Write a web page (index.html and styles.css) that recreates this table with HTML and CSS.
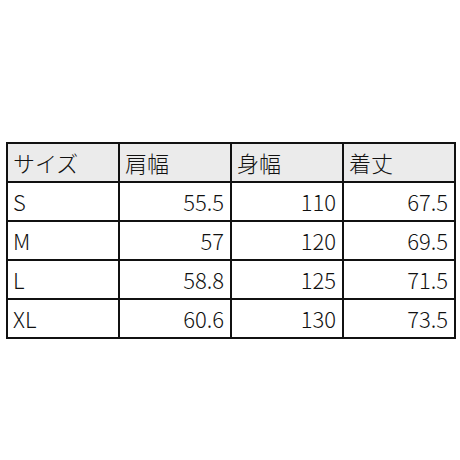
FILE: index.html
```html
<!DOCTYPE html>
<html lang="ja">
<head>
<meta charset="utf-8">
<link rel="stylesheet" href="styles.css">
</head>
<body>
<div class="page">
<table class="size-table">
  <colgroup><col><col><col><col></colgroup>
  <thead>
    <tr><th>サイズ</th><th>肩幅</th><th>身幅</th><th>着丈</th></tr>
  </thead>
  <tbody>
    <tr><td>S</td><td class="num">55.5</td><td class="num">110</td><td class="num">67.5</td></tr>
    <tr><td>M</td><td class="num">57</td><td class="num">120</td><td class="num">69.5</td></tr>
    <tr><td>L</td><td class="num">58.8</td><td class="num">125</td><td class="num">71.5</td></tr>
    <tr><td>XL</td><td class="num">60.6</td><td class="num">130</td><td class="num">73.5</td></tr>
  </tbody>
</table>
</div>
</body>
</html>
```
FILE: styles.css
```css
html, body {
  margin: 0;
  padding: 0;
  background: #ffffff;
}
.page {
  width: 460px;
  height: 460px;
  padding-top: 142px;
  padding-left: 6px;
  box-sizing: border-box;
}
.size-table {
  border-collapse: collapse;
  table-layout: fixed;
  width: 449px;
  font-family: "Noto Sans CJK JP", "Noto Sans", sans-serif;
  font-weight: 300;
  font-size: 22px;
  color: #111111;
  border: 2px solid #111;
}
.size-table col {
  width: 112px;
}
.size-table th,
.size-table td {
  border: 2px solid #111;
  height: 37px;
  padding: 0 6px 0 5px;
  line-height: 37px;
  text-align: left;
  font-weight: 300;
  box-sizing: border-box;
  vertical-align: middle;
}
.size-table th {
  background: #ebebeb;
}
.size-table td.num {
  text-align: right;
}
```
